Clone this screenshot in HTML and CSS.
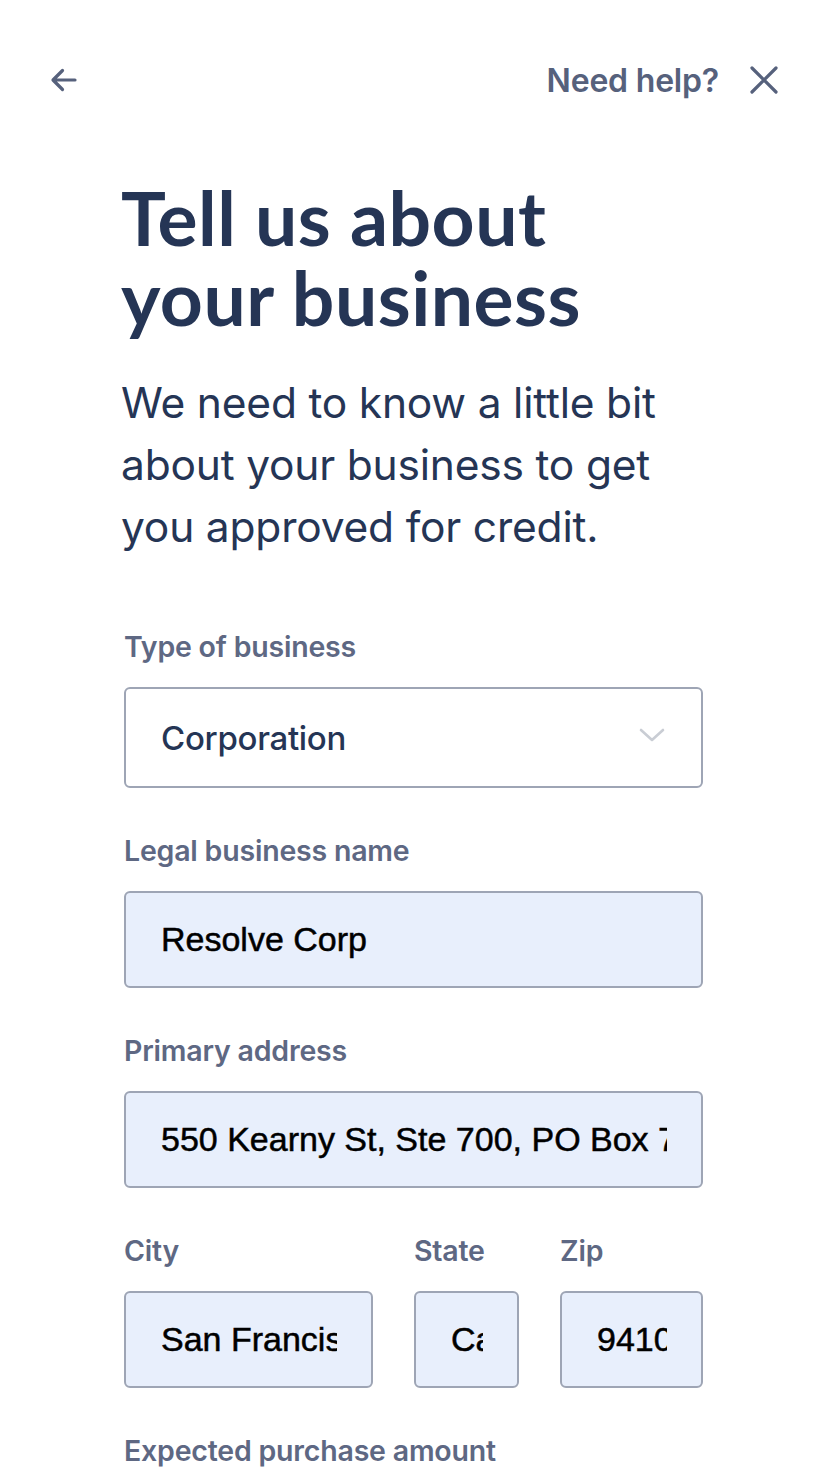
FILE: index.html
```html
<!DOCTYPE html>
<html lang="en">
<head>
<meta charset="utf-8">
<title>Tell us about your business</title>
<link rel="stylesheet" href="styles.css">
</head>
<body>
<header class="topbar">
  <button class="icon-btn" aria-label="Back">
    <svg width="30" height="30" viewBox="0 0 30 30" fill="none" stroke="#56617c" stroke-width="3.2" stroke-linecap="round" stroke-linejoin="round"><path d="M26 15H4.5M13.5 5.5L4 15l9.5 9.5"/></svg>
  </button>
  <div class="top-right">
    <span class="help">Need help?</span>
    <button class="icon-btn" aria-label="Close">
      <svg width="30" height="30" viewBox="0 0 30 30" fill="none" stroke="#56617c" stroke-width="3.2" stroke-linecap="round"><path d="M3 3l24 24M27 3L3 27"/></svg>
    </button>
  </div>
</header>
<main class="content">
  <h1 class="title">Tell us about your business</h1>
  <p class="lead">We need to know a little bit about your business to get you approved for credit.</p>
  <form class="form">
    <div class="field">
      <label class="label">Type of business</label>
      <div class="select">
        <span class="select-value">Corporation</span>
        <svg class="chev" width="26" height="16" viewBox="0 0 26 16" fill="none" stroke="#c9cdd4" stroke-width="2.6" stroke-linecap="round" stroke-linejoin="round"><path d="M2 3l11 10L24 3"/></svg>
      </div>
    </div>
    <div class="field">
      <label class="label">Legal business name</label>
      <input class="input" value="Resolve Corp">
    </div>
    <div class="field">
      <label class="label">Primary address</label>
      <input class="input" value="550 Kearny St, Ste 700, PO Box 7000">
    </div>
    <div class="row">
      <div class="field city">
        <label class="label">City</label>
        <input class="input" value="San Francisco">
      </div>
      <div class="field state">
        <label class="label">State</label>
        <input class="input" value="California">
      </div>
      <div class="field zip">
        <label class="label">Zip</label>
        <input class="input" value="94108">
      </div>
    </div>
    <div class="field">
      <label class="label">Expected purchase amount</label>
    </div>
  </form>
</main>
</body>
</html>
```
FILE: styles.css
```css
* { box-sizing: border-box; }
html, body { margin: 0; padding: 0; background: #fff; }
body { font-family: "Liberation Sans", Arial, sans-serif; color: #253555; overflow: hidden; height: 1472px; }

.topbar {
  display: flex;
  justify-content: space-between;
  align-items: center;
  padding: 65px 49px 0 49px;
  height: 95px;
}
.icon-btn { background: none; border: 0; padding: 0; display: flex; }
.top-right { display: flex; align-items: center; gap: 30px; }
.help { font-family: "Inter", sans-serif; font-weight: 600; font-size: 32px; color: #56617c; letter-spacing: -0.2px; }

.content { padding: 0 0 0 121px; }
.title {
  font-family: "Lato", sans-serif;
  font-weight: 700;
  font-size: 75px;
  line-height: 80px;
  margin: 82px 0 0 0;
  width: 540px;
  color: #253555;
  letter-spacing: 0.5px;
}
.lead {
  font-family: "Inter", sans-serif;
  font-weight: 400;
  font-size: 42.5px;
  line-height: 62px;
  margin: 35px 0 0 0;
  width: 580px;
  color: #253555;
  letter-spacing: -0.2px;
}

.form { margin-top: 74px; padding-left: 3px; width: 582px; }
.field { display: flex; flex-direction: column; margin-bottom: 48px; }
.label {
  font-family: "Inter", sans-serif;
  font-weight: 600;
  font-size: 28.5px;
  line-height: 30px;
  color: #5e6883;
  margin-bottom: 25px;
  letter-spacing: -0.2px;
}
.select, .input {
  border: 2px solid #9ea5b5;
  border-radius: 6px;
  width: 100%;
}
.select {
  height: 101px;
  display: flex;
  align-items: center;
  justify-content: space-between;
  padding: 0 36px 0 35px;
  background: #fff;
}
.chev { margin-top: -6px; }
.select-value { font-family: "Inter", sans-serif; font-weight: 500; font-size: 33px; color: #253555; letter-spacing: -0.3px; }
.input {
  height: 97px;
  background: #e8effc;
  padding: 0 34px 0 35px;
  font-family: "Liberation Sans", Arial, sans-serif;
  font-size: 34px;
  color: #000;
  outline: none;
  -webkit-text-stroke: 0.5px #000;
}
.row { display: flex; gap: 41px; }
.row .field { flex: none; }
.city { width: 249px; }
.state { width: 105px; }
.zip { width: 143px; }
```
